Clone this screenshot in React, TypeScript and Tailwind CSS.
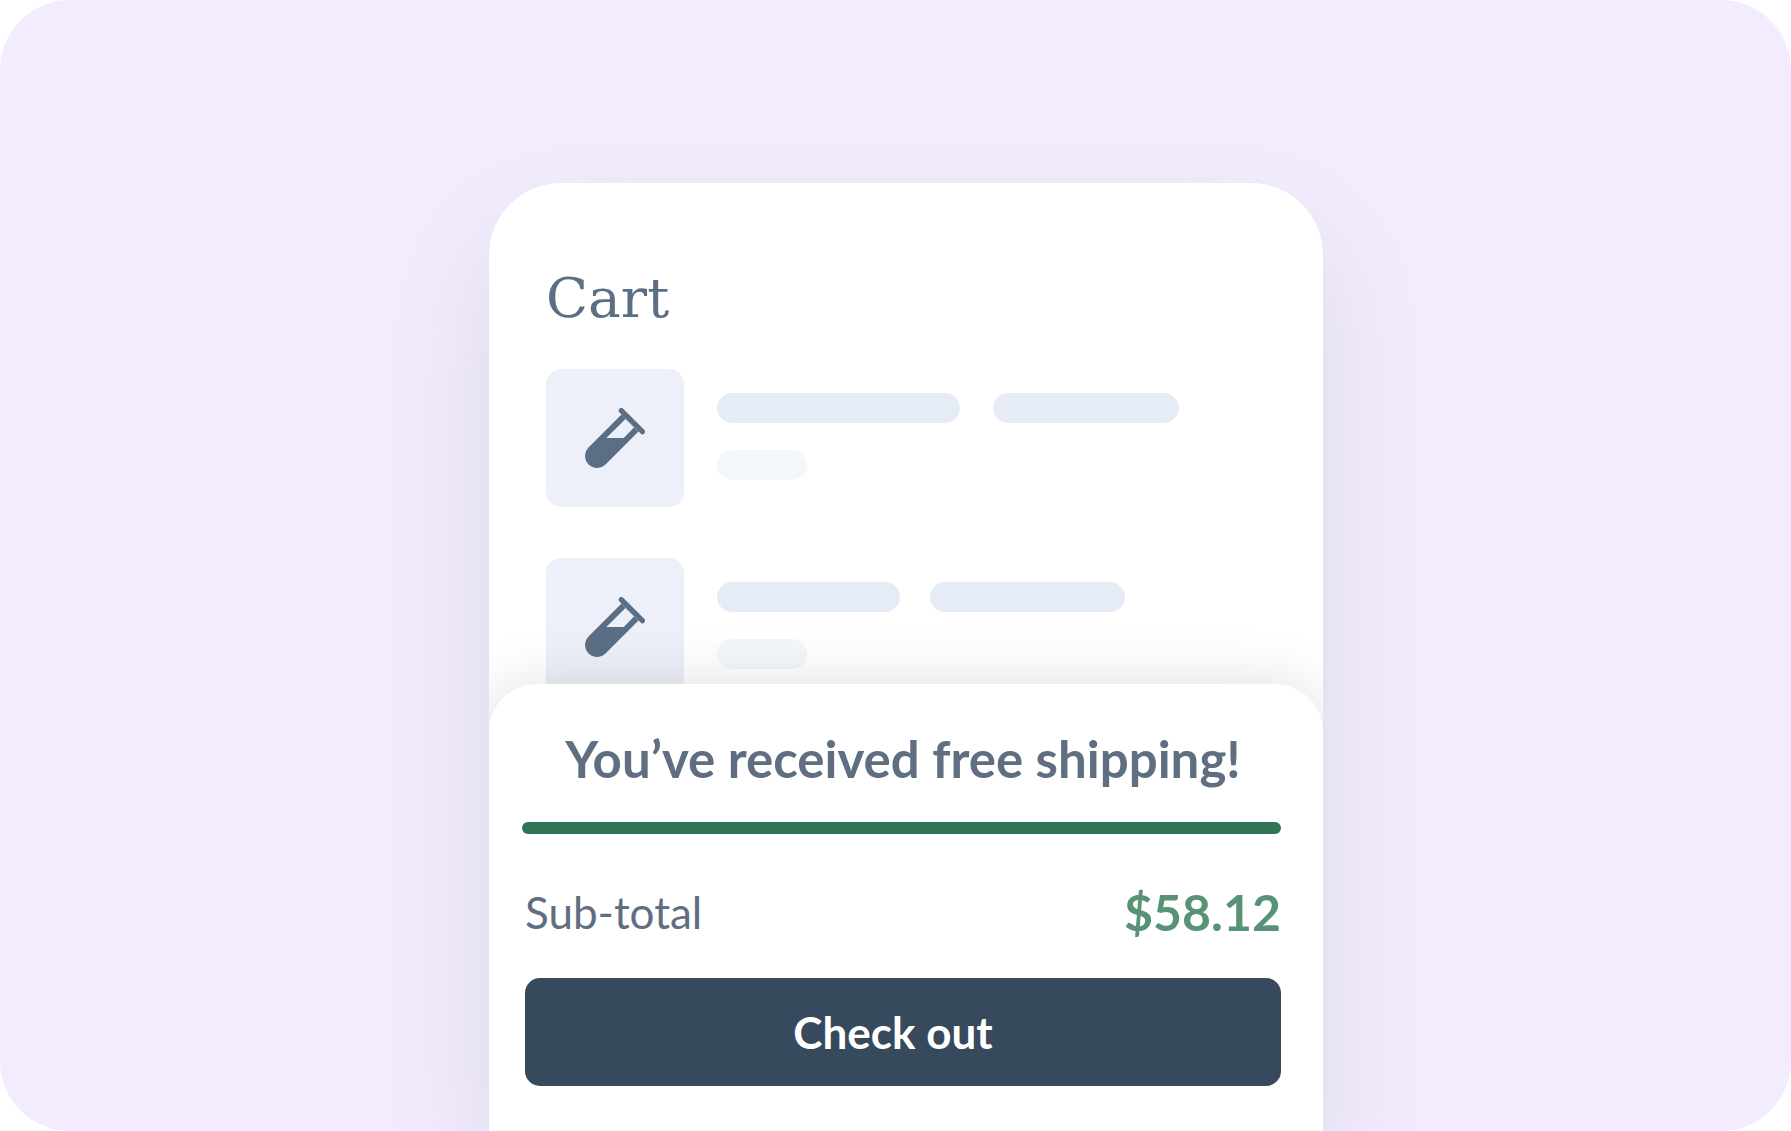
import React from 'react';

type CartItem = {
    id: number;
    name: string;
    brand: string;
}

// Placeholder lines for every product, until the real text is loaded
const items: CartItem[] = [
    { id: 1, name: 'w-[243px] mr-[33px]', brand: 'w-[186px]' },
    { id: 2, name: 'w-[183px] mr-[30px]', brand: 'w-[195px]' },
];

const TestTube = () => (
    <svg viewBox="0 0 60 60" className="size-[60px] text-[#5a6e85]" aria-hidden="true">
        <path
            fill="currentColor"
            fillRule="evenodd"
            d="M36.5 6.5 L3.5 39.5 A12 12 0 0 0 20.5 56.5 L53.5 23.5 Z M40.5 11 L49 19.5 L38.7 30 H21.3 Z"
        />
        <path d="M36.3 2.6 L57.4 23.7" stroke="currentColor" strokeWidth="5.2" strokeLinecap="round" />
    </svg>
);

const CartRow = ({ item }: { item: CartItem }) => (
    <li className="flex gap-[33px]">
        <div className="flex size-[138px] shrink-0 items-center justify-center rounded-[15px] bg-[#edf0f8]">
            <TestTube />
        </div>
        <div className="flex flex-col gap-[27px] pt-6">
            <div className="flex">
                <div className={`h-[30px] rounded-full bg-[#e5ecf5] ${item.name}`} />
                <div className={`h-[30px] rounded-full bg-[#e5ecf5] ${item.brand}`} />
            </div>
            <div className="h-[30px] w-[90px] rounded-full bg-[#f3f6fb]" />
        </div>
    </li>
);

const App = () => {
    return (
        <div className="min-h-screen bg-white">
            <main className="flex min-h-screen justify-center overflow-hidden rounded-[70px] bg-[#f3ecff] pt-[183px] pl-[21px] font-['Lato',sans-serif]">
                <div className="flex w-full max-w-[834px] flex-col rounded-t-[72px] bg-white shadow-[0_54px_108px_rgba(70,100,85,0.14)]">
                    <div className="flex grow flex-col overflow-hidden rounded-t-[72px]">
                        {/* Products */}
                        <section className="px-[57px] pt-[83px]">
                            <h1 className="mb-[39px] font-['DejaVu_Serif',serif] text-[55px] leading-[64px] text-[#5a6e85]">
                                Cart
                            </h1>
                            <ul className="flex flex-col gap-[51px]">
                                {items.map((item) => (
                                    <CartRow key={item.id} item={item} />
                                ))}
                            </ul>
                        </section>

                        {/* Summary sheet, slides over the last product */}
                        <section className="relative -mt-3 flex grow flex-col rounded-t-[48px] bg-white pr-[42px] pb-[45px] pl-9 shadow-[0_0_60px_rgba(0,0,0,0.13)]">
                            <h2 className="pt-[45px] text-center text-[51px] leading-[60px] font-bold whitespace-nowrap text-[#5f6e80]">
                                You’ve received free shipping!
                            </h2>
                            <div
                                role="progressbar"
                                aria-label="Free shipping"
                                aria-valuenow={100}
                                className="mt-[33px] -ml-[3px] h-3 rounded-full bg-[#307553]"
                            />
                            <div className="mt-12 flex items-center justify-between leading-[60px]">
                                <span className="text-[44px] text-[#5f6e80]">Sub-total</span>
                                <span className="text-[50px] font-bold text-[#599376]">$58.12</span>
                            </div>
                            <button
                                type="button"
                                className="mt-9 h-[108px] rounded-[15px] bg-[#36495d] pr-5 text-[44px] leading-[60px] font-bold text-white"
                            >
                                Check out
                            </button>
                        </section>
                    </div>
                </div>
            </main>
        </div>
    );
};

export default App;
